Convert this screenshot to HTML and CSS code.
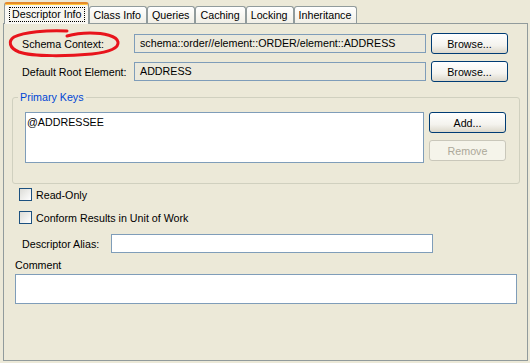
FILE: index.html
```html
<!DOCTYPE html>
<html lang="en">
<head>
    <meta charset="UTF-8">
    <title>Descriptor Info</title>
    <link rel="stylesheet" href="styles.css">
</head>
<body>
    <div class="window">
        <div class="tabs">
            <div class="tab active"><span class="focus">Descriptor Info</span></div>
            <div class="tab">Class Info</div>
            <div class="tab">Queries</div>
            <div class="tab">Caching</div>
            <div class="tab">Locking</div>
            <div class="tab">Inheritance</div>
        </div>

        <div class="panel">
            <div class="form-grid">
                <label class="field-label">Schema Context:</label>
                <div class="text-field disabled">schema::order//element::ORDER/element::ADDRESS</div>
                <button class="btn">Browse...</button>

                <label class="field-label">Default Root Element:</label>
                <div class="text-field disabled">ADDRESS</div>
                <button class="btn">Browse...</button>
            </div>

            <fieldset class="group">
                <legend>Primary Keys</legend>
                <div class="group-body">
                    <div class="list-box">@ADDRESSEE</div>
                    <div class="list-actions">
                        <button class="btn">Add...</button>
                        <button class="btn" disabled>Remove</button>
                    </div>
                </div>
            </fieldset>

            <div class="checks">
                <label class="check-row"><span class="checkbox"></span>Read-Only</label>
                <label class="check-row"><span class="checkbox"></span>Conform Results in Unit of Work</label>
            </div>

            <div class="alias-row">
                <label class="alias-label">Descriptor Alias:</label>
                <div class="text-field white alias-field"></div>
            </div>

            <div class="comment">
                <label class="comment-label">Comment</label>
                <div class="text-field white comment-field"></div>
            </div>
        </div>

        <!-- red highlight drawn over the first label -->
        <svg class="annotation" width="130" height="62" viewBox="0 0 130 62">
            <path d="M67 31 C47 30 24 32 14 37 C8 41 9 48 19 52 C33 57 70 56 92 54 C110 52 119 48 118 42 C117 36 104 33 90 33 C82 33 74 34 67 36"
                  fill="none" stroke="#e8141c" stroke-width="3" stroke-linecap="round"/>
        </svg>
    </div>
</body>
</html>
```

FILE: styles.css
```css
* {
    box-sizing: border-box;
}

body {
    margin: 0;
    background-color: #ece9d8;
    font-family: "Liberation Sans", Arial, sans-serif;
    font-size: 10.7px;
    color: #000;
}

.window {
    position: relative;
    width: 530px;
    height: 363px;
}

/* Tabs */
.tabs {
    display: flex;
    align-items: flex-end;
    height: 23px;
    padding-left: 4px;
}

.tab {
    height: 17px;
    padding: 0 5px 0 4px;
    line-height: 16px;
    border: 1px solid #919b9c;
    border-bottom: none;
    border-radius: 3px 3px 0 0;
    background: linear-gradient(#ffffff, #f1efe6);
    white-space: nowrap;
}

.tab.active {
    position: relative;
    z-index: 1;
    height: 22px;
    margin-bottom: -1px;
    padding: 0 3px 0 4px;
    line-height: 18px;
    border-top: 2px solid #e68b2c;
    box-shadow: inset 0 1px 0 #ffc73c;
    background: #f8f7f2;
}

.focus {
    display: inline-block;
    padding: 0 2px;
    line-height: 13px;
    margin-top: 3px;
    border: 1px dotted #000;
}

/* Panel */
.panel {
    margin-left: 3px;
    width: 525px;
    height: 338px;
    border: 1px solid #919b9c;
    background-color: #ece9d8;
}

.form-grid {
    display: grid;
    grid-template-columns: 107px 292px 77px;
    grid-auto-rows: 21px;
    column-gap: 5px;
    row-gap: 7px;
    align-items: center;
    margin-top: 9px;
    padding-left: 18px;
}

.field-label,
.alias-label {
    white-space: nowrap;
}

.text-field {
    height: 19px;
    line-height: 17px;
    padding: 0 5px;
    border: 1px solid #7f9db9;
    white-space: nowrap;
    overflow: hidden;
}

.text-field.disabled {
    background-color: #ebe9dc;
}

.text-field.white {
    background-color: #fff;
}

.btn {
    height: 21px;
    width: 77px;
    padding: 0;
    font-family: inherit;
    font-size: 10.7px;
    color: #000;
    border: 1px solid #003c74;
    border-radius: 3px;
    background: linear-gradient(#ffffff 0%, #f4f3ee 60%, #dcd8cb 100%);
}

.btn:disabled {
    color: #aca899;
    border-color: #c9c7ba;
    background: #f5f4ea;
}

/* Primary keys group */
.group {
    margin: 9px 7px 0 8px;
    padding: 0;
    height: 93px;
    border: 1px solid #d0d0bf;
    border-radius: 3px;
}

.group legend {
    margin-left: 5px;
    padding: 0 2px;
    line-height: 13px;
    color: #0046d5;
}

.group-body {
    display: flex;
    gap: 5px;
    padding: 8px 0 0 12px;
}

.list-box {
    width: 399px;
    height: 51px;
    padding: 2px 1px;
    line-height: 14px;
    background-color: #fff;
    border: 1px solid #7f9db9;
}

.list-actions {
    display: flex;
    flex-direction: column;
    gap: 7px;
}

/* Checkboxes */
.checks {
    display: flex;
    flex-direction: column;
    gap: 10px;
    margin-top: 4px;
    padding-left: 15px;
}

.check-row {
    display: flex;
    align-items: center;
    height: 13px;
    gap: 4px;
}

.checkbox {
    width: 13px;
    height: 13px;
    border: 1px solid #1c5180;
    background: linear-gradient(135deg, #dcdcd7, #ffffff);
}

/* Alias + comment */
.alias-row {
    display: flex;
    align-items: center;
    margin-top: 10px;
    padding-left: 18px;
}

.alias-label {
    width: 89px;
}

.alias-field {
    width: 322px;
}

.comment {
    padding-left: 11px;
    margin-top: 6px;
}

.comment-label {
    display: block;
    line-height: 13px;
}

.comment-field {
    margin-top: 2px;
    width: 502px;
    height: 30px;
}

.annotation {
    position: absolute;
    left: 0;
    top: 0;
    z-index: 2;
    pointer-events: none;
}
```
